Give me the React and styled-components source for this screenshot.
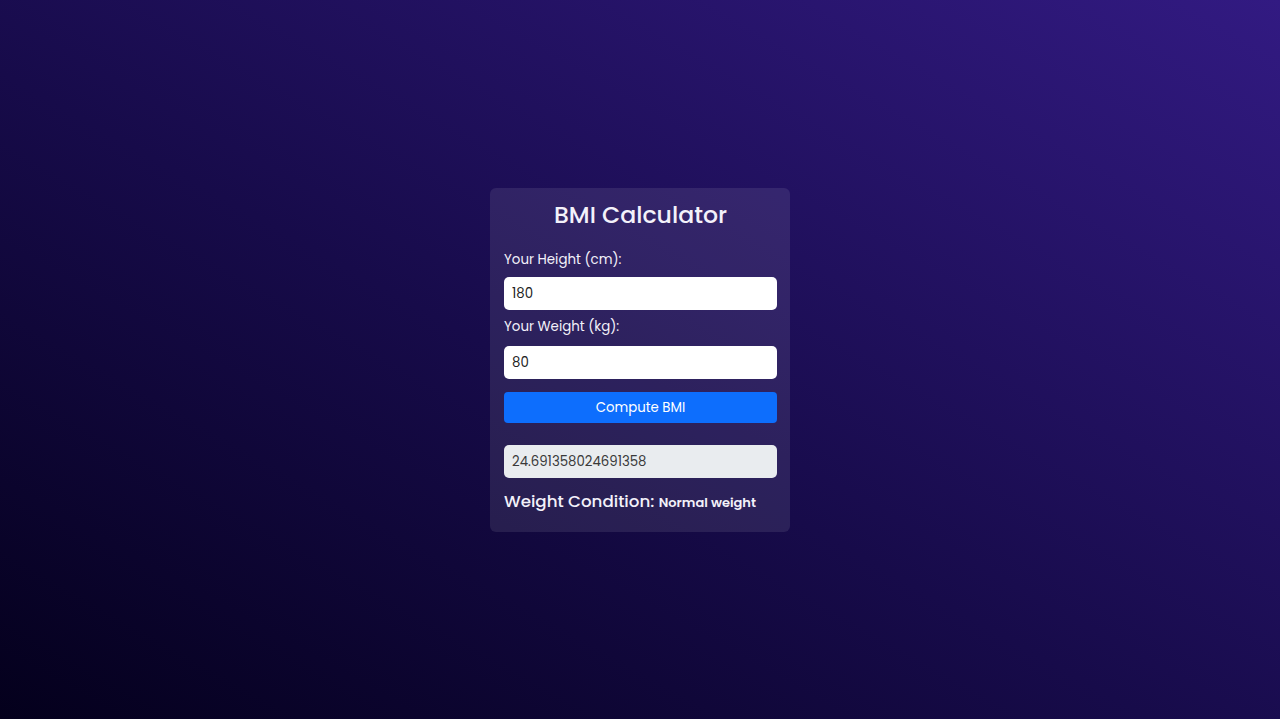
import React, { useState } from "react";
import styled, { createGlobalStyle } from "styled-components";

const GlobalStyle = createGlobalStyle`
  html, body {
    margin: 0;
    padding: 0;
    height: 100%;
  }
  body {
    font-family: 'Poppins', 'Open Sans', 'Liberation Sans', sans-serif;
  }
  #root {
    height: 100%;
  }
`;

const Page = styled.div`
  min-height: 100vh;
  display: flex;
  align-items: center;
  justify-content: center;
  background: linear-gradient(to top right, #04001c 0%, #170b4a 45%, #321a82 100%);
`;

const Card = styled.div`
  width: 300px;
  box-sizing: border-box;
  padding: 12px 13px 17px 14px;
  border-radius: 6px;
  background: rgba(255, 255, 255, 0.09);
  color: #f3f1fa;
`;

const Title = styled.h1`
  margin: 0 0 19px;
  text-align: center;
  font-size: 23.6px;
  font-weight: 500;
  line-height: 30px;
`;

const Label = styled.label`
  display: block;
  font-size: 13.4px;
  line-height: 22px;
  margin-bottom: ${(p) => p.$gap || 6}px;
`;

const Input = styled.input`
  display: block;
  width: 100%;
  box-sizing: border-box;
  height: 33px;
  padding: 2px 8px 0;
  border: none;
  border-radius: 5px;
  font-family: inherit;
  font-size: 13.3px;
  color: ${(p) => (p.readOnly ? "#3a3a3a" : "#222")};
  background: ${(p) => (p.readOnly ? "#e9ecef" : "#fff")};
  margin-bottom: ${(p) => p.$gap || 0}px;
  outline: none;
`;

const Button = styled.button`
  display: block;
  width: 100%;
  height: 31px;
  padding-top: 2px;
  border: none;
  border-radius: 4px;
  background: #0d6efd;
  color: #fff;
  font-family: inherit;
  font-size: 13.3px;
  cursor: pointer;
  margin-bottom: 22px;
`;

const Condition = styled.div`
  margin-top: 11px;
  font-size: 16.7px;
  font-weight: 500;
  line-height: 24px;
`;

const ConditionValue = styled.span`
  font-size: 13px;
  font-weight: 600;
`;

export default function App() {
  const [height, setHeight] = useState("180");
  const [weight, setWeight] = useState("80");
  const [bmi, setBmi] = useState(80 / (1.8 * 1.8));

  const compute = () => {
    const h = parseFloat(height) / 100;
    const w = parseFloat(weight);
    if (h > 0 && w > 0) setBmi(w / (h * h));
  };

  const condition =
    bmi < 18.5 ? "Underweight" : bmi < 25 ? "Normal weight" : bmi < 30 ? "Overweight" : "Obese";

  return (
    <Page>
      <GlobalStyle />
      <Card>
        <Title>BMI Calculator</Title>
        <Label $gap={6}>Your Height (cm):</Label>
        <Input value={height} onChange={(e) => setHeight(e.target.value)} $gap={6} />
        <Label $gap={8}>Your Weight (kg):</Label>
        <Input value={weight} onChange={(e) => setWeight(e.target.value)} $gap={13} />
        <Button onClick={compute}>Compute BMI</Button>
        <Input readOnly value={String(bmi)} />
        <Condition>
          Weight Condition: <ConditionValue>{condition}</ConditionValue>
        </Condition>
      </Card>
    </Page>
  );
}
